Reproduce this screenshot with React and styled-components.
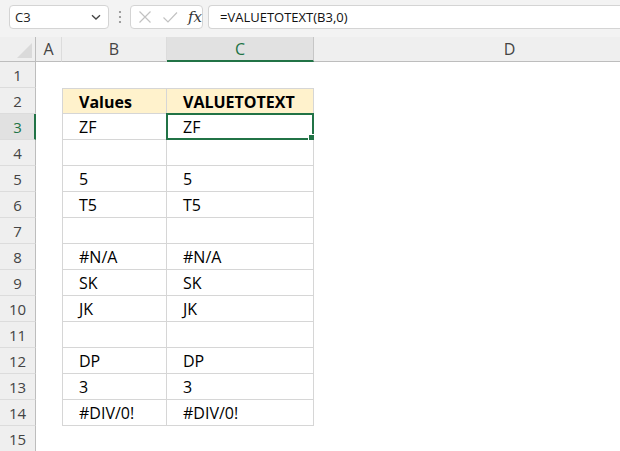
import React from "react";
import styled, { createGlobalStyle, css } from "styled-components";

const Global = createGlobalStyle`
  html, body { margin: 0; padding: 0; background: #ffffff; }
  body { font-family: "Open Sans", "Noto Sans", sans-serif; overflow: hidden; }
  * { box-sizing: border-box; }
`;

const GREEN = "#217346";
const HEADER_BG = "#efefef";
const HEADER_SEL = "#e1e1e1";
const TABLE_LINE = "#d6d6d6";

const Page = styled.div`
  width: 620px;
  height: 451px;
  overflow: hidden;
  background: #fff;
  display: flex;
  flex-direction: column;
`;

const Toolbar = styled.div`
  height: 37px;
  flex: none;
  background: #f3f3f3;
  display: flex;
  align-items: flex-start;
  padding: 5px 0 0 9px;
  gap: 0;
`;

const NameBox = styled.div`
  width: 100px;
  height: 24px;
  background: #fff;
  border: 1px solid #d4d4d4;
  border-radius: 4px;
  display: flex;
  align-items: center;
  justify-content: space-between;
  padding: 0 6px 0 5px;
  font-size: 13px;
  color: #222;
`;

const Dots = styled.div`
  width: 21px;
  height: 24px;
  display: flex;
  align-items: center;
  justify-content: center;
  color: #9a9a9a;
`;

const IconBox = styled.div`
  width: 73px;
  height: 24px;
  background: #fff;
  border: 1px solid #d4d4d4;
  border-radius: 4px;
  display: flex;
  align-items: center;
  gap: 7px;
  padding: 0 0 0 5px;
`;

const Fx = styled.span`
  font-family: "DejaVu Serif", "Liberation Serif", serif;
  font-style: italic;
  font-size: 15px;
  color: #333;
  margin-left: 2px;
`;

const FormulaInput = styled.div`
  flex: 1;
  height: 24px;
  margin-left: 5px;
  margin-right: -10px;
  background: #fff;
  border: 1px solid #d4d4d4;
  border-right: none;
  border-radius: 4px 0 0 4px;
  display: flex;
  align-items: center;
  padding-left: 11px;
  font-size: 13px;
  color: #111;
`;

const Sheet = styled.div`
  flex: 1;
  display: grid;
  grid-template-columns: 36px 26px 105px 147px 392px;
  grid-template-rows: 25px repeat(15, 26px);
`;

const Corner = styled.div`
  background: ${HEADER_BG};
  border-right: 1px solid #bdbdbd;
  border-bottom: 1px solid #bdbdbd;
  position: relative;
  &::after {
    content: "";
    position: absolute;
    right: 3px;
    bottom: 3px;
    width: 0;
    height: 0;
    border-left: 15px solid transparent;
    border-bottom: 15px solid #dadada;
  }
`;

const ColHead = styled.div`
  background: ${(p) => (p.$sel ? HEADER_SEL : HEADER_BG)};
  border-bottom: ${(p) => (p.$sel ? `2px solid ${GREEN}` : "1px solid #bdbdbd")};
  border-right: 1px solid ${(p) => (p.$sel ? "#c6c6c6" : "#dcdcdc")};
  display: flex;
  align-items: center;
  justify-content: center;
  font-size: 16px;
  color: ${(p) => (p.$sel ? GREEN : "#444")};
  padding-top: ${(p) => (p.$sel ? "1px" : "0")};
`;

const RowHead = styled.div`
  background: ${(p) => (p.$sel ? HEADER_SEL : HEADER_BG)};
  border-right: ${(p) => (p.$sel ? `2px solid ${GREEN}` : "1px solid #bdbdbd")};
  border-bottom: 1px solid #dcdcdc;
  display: flex;
  align-items: center;
  justify-content: center;
  font-size: 15px;
  color: ${(p) => (p.$sel ? GREEN : "#444")};
  padding-left: ${(p) => (p.$sel ? "1px" : "0")};
`;

const Cell = styled.div`
  background: ${(p) => (p.$head ? "#fff2cc" : "#fff")};
  display: flex;
  align-items: center;
  padding-left: 16px;
  padding-top: 1px;
  font-size: 16px;
  font-weight: ${(p) => (p.$head ? 700 : 400)};
  color: #000;
  white-space: nowrap;
  position: relative;
  ${(p) =>
    p.$table &&
    css`
      border-right: 1px solid ${TABLE_LINE};
      border-bottom: 1px solid ${TABLE_LINE};
    `}
  ${(p) =>
    p.$first &&
    css`
      border-left: 1px solid ${TABLE_LINE};
    `}
  ${(p) =>
    p.$top &&
    css`
      border-top: 1px solid ${TABLE_LINE};
    `}
`;

const Selection = styled.div`
  position: absolute;
  left: -1px;
  top: -1px;
  right: -1px;
  bottom: -1px;
  border: 2px solid ${GREEN};
  pointer-events: none;
  &::after {
    content: "";
    position: absolute;
    right: -4px;
    bottom: -4px;
    width: 6px;
    height: 6px;
    background: ${GREEN};
    border: 1px solid #fff;
  }
`;

const Icon = ({ children }) => (
  <svg width="18" height="18" viewBox="0 0 18 18" fill="none">
    {children}
  </svg>
);

const cols = ["A", "B", "C", "D"];
const data = [
  ["Values", "VALUETOTEXT"],
  ["ZF", "ZF"],
  ["", ""],
  ["5", "5"],
  ["T5", "T5"],
  ["", ""],
  ["#N/A", "#N/A"],
  ["SK", "SK"],
  ["JK", "JK"],
  ["", ""],
  ["DP", "DP"],
  ["3", "3"],
  ["#DIV/0!", "#DIV/0!"],
];

export default function App() {
  const rows = [];
  for (let r = 1; r <= 15; r++) {
    const inTable = r >= 2 && r <= 14;
    const vals = inTable ? data[r - 2] : ["", ""];
    rows.push(
      <React.Fragment key={r}>
        <RowHead $sel={r === 3}>{r}</RowHead>
        <Cell />
        <Cell $table={inTable} $first={inTable} $top={r === 2} $head={r === 2}>
          {vals[0]}
        </Cell>
        <Cell $table={inTable} $top={r === 2} $head={r === 2}>
          {vals[1]}
          {r === 3 && <Selection />}
        </Cell>
        <Cell />
      </React.Fragment>
    );
  }
  return (
    <Page>
      <Global />
      <Toolbar>
        <NameBox>
          <span>C3</span>
          <svg width="12" height="12" viewBox="0 0 12 12" fill="none">
            <path d="M2 4.2 L6 8 L10 4.2" stroke="#444" strokeWidth="1.3" />
          </svg>
        </NameBox>
        <Dots>
          <svg width="4" height="14" viewBox="0 0 4 14">
            <circle cx="2" cy="2" r="1.1" fill="#8a8a8a" />
            <circle cx="2" cy="7" r="1.1" fill="#8a8a8a" />
            <circle cx="2" cy="12" r="1.1" fill="#8a8a8a" />
          </svg>
        </Dots>
        <IconBox>
          <Icon>
            <path d="M3.5 3.5 L14.5 14.5 M14.5 3.5 L3.5 14.5" stroke="#c2c2c2" strokeWidth="1.2" />
          </Icon>
          <Icon>
            <path d="M2.5 9.5 L7 14 L16 4.5" stroke="#c2c2c2" strokeWidth="1.2" />
          </Icon>
          <Fx>fx</Fx>
        </IconBox>
        <FormulaInput>=VALUETOTEXT(B3,0)</FormulaInput>
      </Toolbar>
      <Sheet>
        <Corner />
        {cols.map((c) => (
          <ColHead key={c} $sel={c === "C"}>
            {c}
          </ColHead>
        ))}
        {rows}
      </Sheet>
    </Page>
  );
}
